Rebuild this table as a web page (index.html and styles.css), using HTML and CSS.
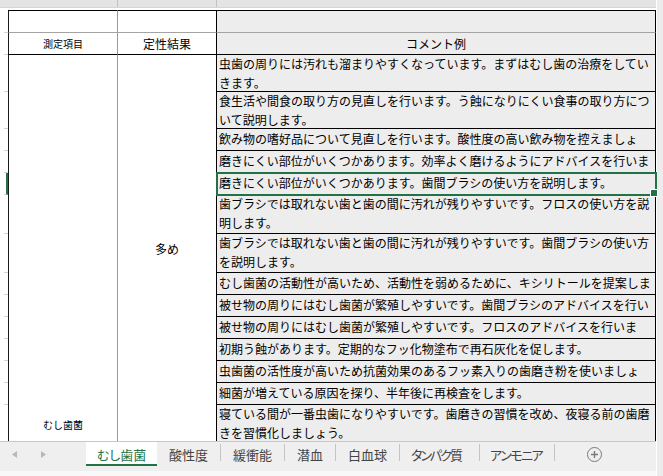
FILE: index.html
```html
<!DOCTYPE html>
<html lang="ja">
<head>
<meta charset="utf-8">
<link rel="stylesheet" href="styles.css">
</head>
<body>
<div class="window">
  <div class="colhead">
    <div class="ch-corner"></div>
    <div class="ch-a"></div>
    <div class="ch-b"></div>
    <div class="ch-c"></div>
  </div>
  <div class="sheet">
    <div class="grid">
      <div class="rh"></div>
      <div class="hd top ca"></div>
      <div class="hd top"></div>
      <div class="hd top cc"></div>

      <div class="rh"></div>
      <div class="hd h2 ca small">測定項目</div>
      <div class="hd h2">定性結果</div>
      <div class="hd h2 cc">コメント例</div>

      <div class="ma">むし歯菌</div>
      <div class="mb">多め</div>

      <div class="rh"></div>
      <div class="cm two">虫歯の周りには汚れも溜まりやすくなっています。まずはむし歯の治療をしていきます。</div>
      <div class="rh"></div>
      <div class="cm two">食生活や間食の取り方の見直しを行います。う蝕になりにくい食事の取り方について説明します。</div>
      <div class="rh"></div>
      <div class="cm">飲み物の嗜好品について見直しを行います。酸性度の高い飲み物を控えましょう。</div>
      <div class="rh"></div>
      <div class="cm">磨きにくい部位がいくつかあります。効率よく磨けるようにアドバイスを行います。</div>
      <div class="rh sel"></div>
      <div class="cm sel">磨きにくい部位がいくつかあります。歯間ブラシの使い方を説明します。</div>
      <div class="rh"></div>
      <div class="cm two">歯ブラシでは取れない歯と歯の間に汚れが残りやすいです。フロスの使い方を説明します。</div>
      <div class="rh"></div>
      <div class="cm two">歯ブラシでは取れない歯と歯の間に汚れが残りやすいです。歯間ブラシの使い方を説明します。</div>
      <div class="rh"></div>
      <div class="cm">むし歯菌の活動性が高いため、活動性を弱めるために、キシリトールを提案します。</div>
      <div class="rh"></div>
      <div class="cm">被せ物の周りにはむし歯菌が繁殖しやすいです。歯間ブラシのアドバイスを行います。</div>
      <div class="rh"></div>
      <div class="cm">被せ物の周りにはむし歯菌が繁殖しやすいです。フロスのアドバイスを行います。</div>
      <div class="rh"></div>
      <div class="cm">初期う蝕があります。定期的なフッ化物塗布で再石灰化を促します。</div>
      <div class="rh"></div>
      <div class="cm">虫歯菌の活性度が高いため抗菌効果のあるフッ素入りの歯磨き粉を使いましょう。</div>
      <div class="rh"></div>
      <div class="cm">細菌が増えている原因を探り、半年後に再検査をします。</div>
      <div class="rh"></div>
      <div class="cm two">寝ている間が一番虫歯になりやすいです。歯磨きの習慣を改め、夜寝る前の歯磨きを習慣化しましょう。</div>
    </div>
  </div>
  <div class="tabbar">
    <div class="nav">
      <svg class="arrow" width="5" height="7" viewBox="0 0 5 7"><path d="M5 0 L0 3.5 L5 7 Z"/></svg>
      <svg class="arrow" width="5" height="7" viewBox="0 0 5 7"><path d="M0 0 L5 3.5 L0 7 Z"/></svg>
    </div>
    <div class="tab on">むし歯菌</div>
    <div class="tab">酸性度</div>
    <div class="sep"></div>
    <div class="tab">緩衝能</div>
    <div class="sep"></div>
    <div class="tab">潜血</div>
    <div class="sep"></div>
    <div class="tab">白血球</div>
    <div class="sep"></div>
    <div class="tab kana2">タンパク質</div>
    <div class="sep"></div>
    <div class="tab kana1">アンモニア</div>
    <div class="sep"></div>
    <svg class="add" width="17" height="17" viewBox="0 0 17 17">
      <circle cx="8.5" cy="8.5" r="7" fill="none" stroke="#7a7a7a" stroke-width="1"/>
      <path d="M8.5 5 V12 M5 8.5 H12" stroke="#7a7a7a" stroke-width="1.4"/>
    </svg>
  </div>
  <div class="bottom"></div>
</div>
</body>
</html>
```
FILE: styles.css
```css
* { box-sizing: border-box; }
html, body { margin: 0; padding: 0; }
body {
  width: 663px;
  height: 476px;
  overflow: hidden;
  background: #fff;
  font-family: "Noto Sans CJK JP", "Noto Sans", sans-serif;
  color: #000;
}
.window {
  width: 663px;
  height: 476px;
  display: flex;
  flex-direction: column;
  background: linear-gradient(to right, #fff 657px, #ececec 657px);
}
.colhead {
  height: 8px;
  width: 656px;
  display: flex;
  background: #e4e4e4;
  border-bottom: 1px solid #d6d6d6;
}
.ch-corner { width: 8px; }
.ch-a { width: 110px; border-right: 1px solid #c2c2c2; }
.ch-b { width: 99px; border-right: 1px solid #c2c2c2; }
.ch-c { flex: 1; }

.sheet {
  height: 433px;
  overflow: hidden;
  padding-top: 2px;
}
.grid {
  display: grid;
  grid-template-columns: 8px 110px 99px 439px;
  grid-template-rows: 23px 22px 37px 37px 22px 22px 22px 39px 39px 22px 22px 22px 22px 22px 22px 37px;
}
.rh {
  margin-left: 4px;
  border-bottom: 1px solid #d2d2d2;
}
.rh.sel { border-right: 2px solid #217346; }

.hd {
  display: flex;
  align-items: center;
  justify-content: center;
  font-size: 12px;
  border-right: 1px solid #000;
  border-bottom: 1px solid #a4a4a4;
}
.hd.top { border-top: 1px solid #000; }
.hd.h2 { border-bottom-color: #000; }
.hd.ca { border-left: 1px solid #1a1a1a; border-right-color: #9a9a9a; }
.hd.cc { background: #ededed; }
.small { font-size: 10px; }

.ma {
  grid-row: 3 / 17;
  grid-column: 2;
  border-left: 1px solid #1a1a1a;
  border-right: 1px solid #9a9a9a;
  border-bottom: 1px solid #000;
  display: flex;
  align-items: flex-end;
  justify-content: center;
  padding-bottom: 9px;
  font-size: 10px;
}
.mb {
  grid-row: 3 / 17;
  grid-column: 3;
  border-right: 1px solid #000;
  border-bottom: 1px solid #000;
  display: flex;
  align-items: center;
  justify-content: center;
  font-size: 12px;
}
.cm {
  background: #ededed;
  border-right: 1px solid #000;
  border-bottom: 1px solid #000;
  font-size: 12px;
  line-height: 18px;
  padding: 1px 0 0 2px;
  overflow: hidden;
  line-break: normal;
}
.cm.two { padding-top: 0; line-height: 18.5px; }
.cm.sel {
  overflow: visible;
  position: relative;
  z-index: 1;
  outline: 2px solid #217346;
  outline-offset: -1px;
}
.cm.sel::after {
  content: "";
  position: absolute;
  right: -3px;
  bottom: -3px;
  width: 6px;
  height: 6px;
  background: #217346;
  border: 1px solid #fff;
}

.tabbar {
  height: 30px;
  width: 656px;
  border-top: 1px solid #c8c8c8;
  background: #efefef;
  display: flex;
  align-items: flex-start;
}
.nav {
  width: 86px;
  height: 24px;
  display: flex;
  align-items: center;
  padding-left: 12px;
  gap: 24px;
}
.arrow { fill: #b8b8b8; }
.tab {
  height: 24px;
  padding: 3px 12px 0;
  font-size: 13px;
  line-height: 19px;
  color: #444;
  font-feature-settings: "palt";
  white-space: nowrap;
}
.tab.kana2 { width: 79px; padding: 3px 0 0 11px; letter-spacing: -2px; overflow: hidden; }
.tab.kana1 { width: 74px; padding: 3px 0 0 10px; letter-spacing: -1.5px; overflow: hidden; }
.tab.on {
  width: 71px;
  padding: 3px 0 0;
  text-align: center;
  background: #fff;
  color: #217346;
  border-bottom: 2px solid #217346;
}
.sep {
  width: 1px;
  height: 17px;
  margin-top: 2px;
  background: #c4c4c4;
}
.add { margin: 4px 0 0 31px; }
.bottom { flex: 1; width: 656px; background: #f8f8f8; }
```
